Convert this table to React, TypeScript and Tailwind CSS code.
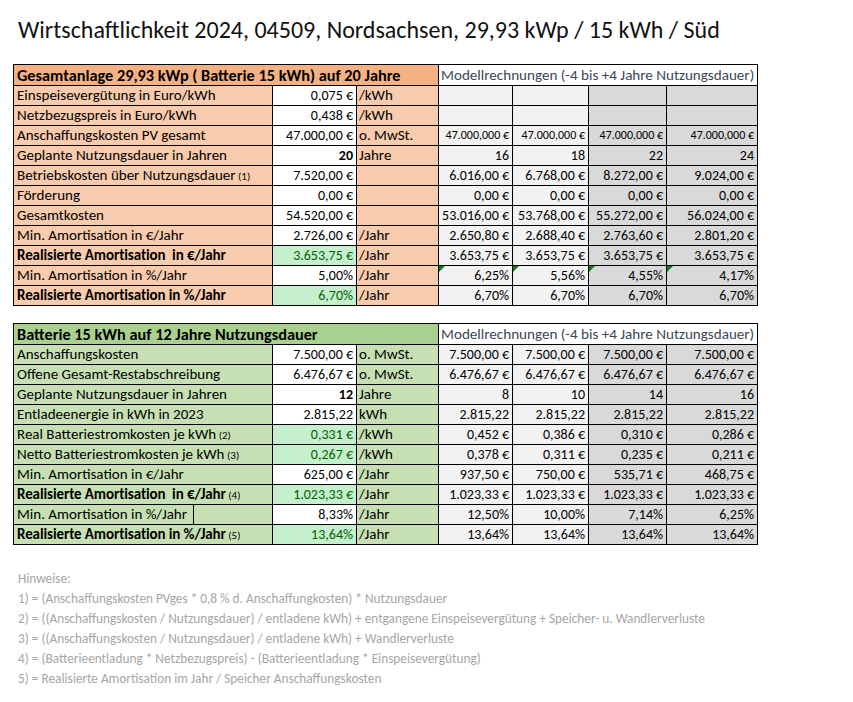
import React from "react";

type Row = {
  label: React.ReactNode;
  boldLabel?: boolean;
  value: string;
  boldValue?: boolean;
  green?: boolean;
  unit: string;
  models: string[];
  smallModels?: boolean;
  triangles?: boolean;
  splitLabel?: boolean;
};

const Note = ({ n }: { n: number }) => (
  <span className="text-[11px] leading-none font-normal tracking-normal"> ({n})</span>
);

const table1: Row[] = [
  { label: "Einspeisevergütung in Euro/kWh", value: "0,075 €", unit: "/kWh", models: ["", "", "", ""] },
  { label: "Netzbezugspreis in Euro/kWh", value: "0,438 €", unit: "/kWh", models: ["", "", "", ""] },
  { label: "Anschaffungskosten PV gesamt", value: "47.000,00 €", unit: "o. MwSt.", models: ["47.000,000 €", "47.000,000 €", "47.000,000 €", "47.000,000 €"], smallModels: true },
  { label: "Geplante Nutzungsdauer in Jahren", value: "20", boldValue: true, unit: "Jahre", models: ["16", "18", "22", "24"] },
  { label: <>Betriebskosten über Nutzungsdauer<Note n={1} /></>, value: "7.520,00 €", unit: "", models: ["6.016,00 €", "6.768,00 €", "8.272,00 €", "9.024,00 €"] },
  { label: "Förderung", value: "0,00 €", unit: "", models: ["0,00 €", "0,00 €", "0,00 €", "0,00 €"] },
  { label: "Gesamtkosten", value: "54.520,00 €", unit: "", models: ["53.016,00 €", "53.768,00 €", "55.272,00 €", "56.024,00 €"] },
  { label: "Min. Amortisation in €/Jahr", value: "2.726,00 €", unit: "/Jahr", models: ["2.650,80 €", "2.688,40 €", "2.763,60 €", "2.801,20 €"] },
  { label: "Realisierte Amortisation\u00a0 in €/Jahr", boldLabel: true, value: "3.653,75 €", green: true, unit: "/Jahr", models: ["3.653,75 €", "3.653,75 €", "3.653,75 €", "3.653,75 €"] },
  { label: "Min. Amortisation in %/Jahr", value: "5,00%", unit: "/Jahr", models: ["6,25%", "5,56%", "4,55%", "4,17%"], triangles: true },
  { label: "Realisierte Amortisation in %/Jahr", boldLabel: true, value: "6,70%", green: true, unit: "/Jahr", models: ["6,70%", "6,70%", "6,70%", "6,70%"] },
];

const table2: Row[] = [
  { label: "Anschaffungskosten", value: "7.500,00 €", unit: "o. MwSt.", models: ["7.500,00 €", "7.500,00 €", "7.500,00 €", "7.500,00 €"] },
  { label: "Offene Gesamt-Restabschreibung", value: "6.476,67 €", unit: "o. MwSt.", models: ["6.476,67 €", "6.476,67 €", "6.476,67 €", "6.476,67 €"] },
  { label: "Geplante Nutzungsdauer in Jahren", value: "12", boldValue: true, unit: "Jahre", models: ["8", "10", "14", "16"] },
  { label: "Entladeenergie in kWh in 2023", value: "2.815,22", unit: "kWh", models: ["2.815,22", "2.815,22", "2.815,22", "2.815,22"] },
  { label: <>Real Batteriestromkosten je kWh<Note n={2} /></>, value: "0,331 €", green: true, unit: "/kWh", models: ["0,452 €", "0,386 €", "0,310 €", "0,286 €"] },
  { label: <>Netto Batteriestromkosten je kWh<Note n={3} /></>, value: "0,267 €", green: true, unit: "/kWh", models: ["0,378 €", "0,311 €", "0,235 €", "0,211 €"] },
  { label: "Min. Amortisation in €/Jahr", value: "625,00 €", unit: "/Jahr", models: ["937,50 €", "750,00 €", "535,71 €", "468,75 €"] },
  { label: <>Realisierte Amortisation{"\u00a0 "}in €/Jahr<Note n={4} /></>, boldLabel: true, value: "1.023,33 €", green: true, unit: "/Jahr", models: ["1.023,33 €", "1.023,33 €", "1.023,33 €", "1.023,33 €"] },
  { label: "Min. Amortisation in %/Jahr", value: "8,33%", unit: "/Jahr", models: ["12,50%", "10,00%", "7,14%", "6,25%"], splitLabel: true },
  { label: <>Realisierte Amortisation in %/Jahr<Note n={5} /></>, boldLabel: true, value: "13,64%", green: true, unit: "/Jahr", models: ["13,64%", "13,64%", "13,64%", "13,64%"] },
];

function Sheet({
  title,
  headBg,
  rowBg,
  rows,
}: {
  title: string;
  headBg: string;
  rowBg: string;
  rows: Row[];
}) {
  return (
    <table className="border-collapse table-fixed w-[744px]">
      <colgroup>
        <col className="w-[259px]" />
        <col className="w-[84px]" />
        <col className="w-[82px]" />
        <col className="w-[74px]" />
        <col className="w-[76px]" />
        <col className="w-[78px]" />
        <col className="w-[91px]" />
      </colgroup>
      <tbody>
        <tr>
          <td colSpan={3} className={`border border-black p-0 font-bold whitespace-nowrap ${headBg}`}>
            <div className="h-[20px] px-[3px] text-[16.3px] leading-[20px] overflow-hidden">{title}</div>
          </td>
          <td colSpan={4} className="border border-black bg-white p-0 text-[#3a4657] whitespace-nowrap">
            <div className="h-[20px] px-[2px] text-[15.1px] leading-[20px] overflow-hidden">
              Modellrechnungen (-4 bis +4 Jahre Nutzungsdauer)
            </div>
          </td>
        </tr>
        {rows.map((r, i) => (
          <tr key={i}>
            <td className={`border border-black p-0 whitespace-nowrap ${rowBg}`}>
              {r.splitLabel ? (
                <div className="flex h-[19px] overflow-hidden">
                  <div className="w-[180px] border-r border-black px-[3px] text-[15px] leading-[19px]">{r.label}</div>
                </div>
              ) : (
                <div
                  className={`h-[19px] overflow-hidden px-[3px] leading-[19px] text-[15px] ${
                    r.boldLabel ? "font-bold tracking-[-0.1px]" : ""
                  }`}
                >
                  {r.label}
                </div>
              )}
            </td>
            <td
              className={`border border-black p-0 text-right whitespace-nowrap ${
                r.green ? "bg-[#c6efce] text-[#006100]" : "bg-white"
              } ${r.boldValue ? "font-bold" : ""}`}
            >
              <div className="h-[19px] overflow-hidden px-[3px] leading-[19px]">{r.value}</div>
            </td>
            <td className={`border border-black p-0 whitespace-nowrap ${rowBg}`}>
              <div className="h-[19px] overflow-hidden px-[2px] text-[15px] leading-[19px]">{r.unit}</div>
            </td>
            {r.models.map((m, j) => (
              <td
                key={j}
                className={`relative border border-black p-0 text-right whitespace-nowrap ${
                  j < 2 ? "bg-[#f2f2f2]" : "bg-[#d9d9d9]"
                }`}
              >
                {r.triangles && (
                  <div className="absolute left-0 top-0 w-0 h-0 border-t-[6px] border-t-[#0a7d1e] border-r-[6px] border-r-transparent" />
                )}
                <div className={`h-[19px] overflow-hidden px-[3px] leading-[19px] ${r.smallModels ? "text-[12px]" : ""}`}>
                  {m}
                </div>
              </td>
            ))}
          </tr>
        ))}
      </tbody>
    </table>
  );
}

export default function App() {
  return (
    <div className="w-[853px] h-[702px] bg-white text-black font-[family-name:Carlito,Lato,sans-serif] text-[14px] leading-[19px]">
      <div className="pl-[18px] pt-[16px] h-[64px] text-[24px] leading-[28px] text-[#111]">
        Wirtschaftlichkeit 2024, 04509, Nordsachsen, 29,93 kWp / 15 kWh / Süd
      </div>
      <div className="pl-[13px]">
        <Sheet
          title="Gesamtanlage 29,93 kWp ( Batterie 15 kWh) auf 20 Jahre"
          headBg="bg-[#f4b183]"
          rowBg="bg-[#f8cbad]"
          rows={table1}
        />
        <div className="h-[17px]" />
        <Sheet
          title="Batterie 15 kWh auf 12 Jahre Nutzungsdauer"
          headBg="bg-[#a9d08e]"
          rowBg="bg-[#c6e0b4]"
          rows={table2}
        />
      </div>
      <div className="pl-[18px] pt-[24px] text-[13.3px] leading-[20px] text-[#a6a6a6] font-light">
        <div>Hinweise:</div>
        <div>1) = (Anschaffungskosten PVges * 0,8 % d. Anschaffungkosten) * Nutzungsdauer</div>
        <div>2) = ((Anschaffungskosten / Nutzungsdauer) / entladene kWh) + entgangene Einspeisevergütung + Speicher- u. Wandlerverluste</div>
        <div>3) = ((Anschaffungskosten / Nutzungsdauer) / entladene kWh) + Wandlerverluste</div>
        <div>4) = (Batterieentladung * Netzbezugspreis) - (Batterieentladung * Einspeisevergütung)</div>
        <div>5) = Realisierte Amortisation im Jahr / Speicher Anschaffungskosten</div>
      </div>
    </div>
  );
}
